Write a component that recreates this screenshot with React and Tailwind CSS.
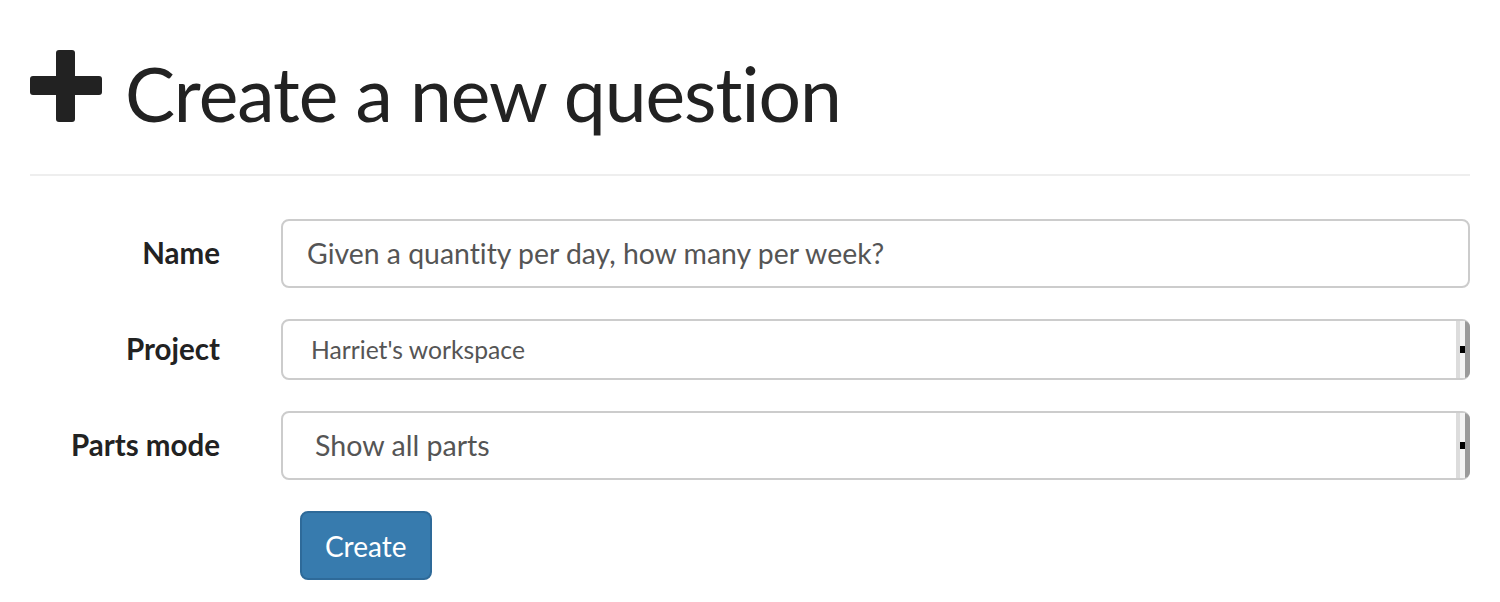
import React from "react";

function Plus() {
  return (
    <svg width="72" height="72" viewBox="0 0 72 72" className="shrink-0">
      <rect x="26" y="0" width="19" height="72" rx="3" fill="#222" />
      <rect x="0" y="26" width="72" height="19" rx="3" fill="#222" />
    </svg>
  );
}

function SelectBox({ text, h, textClass }) {
  return (
    <div className={`flex-1 flex items-stretch border-2 border-[#ccc] rounded-[8px] bg-white ${h}`}>
      <div className={`flex-1 flex items-center text-[#555] ${textClass}`}>{text}</div>
      <div className="w-[14px] flex items-stretch -mr-[2px] rounded-r-[6px] overflow-hidden">
        <div className="w-[4px] bg-[#dcdcdc]" />
        <div className="w-[5px] bg-[#f4f4f4] flex flex-col justify-center">
          <div className="h-[7px] bg-black" />
        </div>
        <div className="w-[5px] bg-[#9a9a9a]" />
      </div>
    </div>
  );
}

export default function App() {
  return (
    <div
      className="w-[1500px] h-[602px] bg-white px-[30px] text-[#222] [font-variant-ligatures:none]"
      style={{ fontFamily: "Lato, 'Open Sans', sans-serif" }}
    >
      <div className="flex items-start gap-[23px] pt-[50px] h-[122px]">
        <Plus />
        <h1 className="text-[75px] leading-none font-normal tracking-[-1px] mt-[6px]">Create a new question</h1>
      </div>
      <div className="mt-[52px] h-[2px] bg-[#eee]" />
      <div className="mt-[43px] flex flex-col">
        <div className="flex items-center">
          <label className="w-[190px] text-right font-bold text-[29.5px]">Name</label>
          <div className="ml-[61px] flex-1 h-[69px] border-2 border-[#ccc] rounded-[8px] flex items-center pl-[24px] text-[28.4px] text-[#555]">
            Given a quantity per day, how many per week?
          </div>
        </div>
        <div className="flex items-center mt-[31px]">
          <label className="w-[190px] text-right font-bold text-[29.5px]">Project</label>
          <div className="ml-[61px] flex-1 flex">
            <SelectBox text="Harriet's workspace" h="h-[61px]" textClass="pl-[28px] text-[24.7px]" />
          </div>
        </div>
        <div className="flex items-center mt-[31px]">
          <label className="w-[190px] text-right font-bold text-[29.5px]">Parts mode</label>
          <div className="ml-[61px] flex-1 flex">
            <SelectBox text="Show all parts" h="h-[69px]" textClass="pl-[32px] text-[28.6px]" />
          </div>
        </div>
        <div className="mt-[31px] ml-[270px]">
          <button className="h-[69px] px-[23px] bg-[#377bae] border-2 border-[#2e6a99] rounded-[8px] text-white text-[28px]">
            Create
          </button>
        </div>
      </div>
    </div>
  );
}
